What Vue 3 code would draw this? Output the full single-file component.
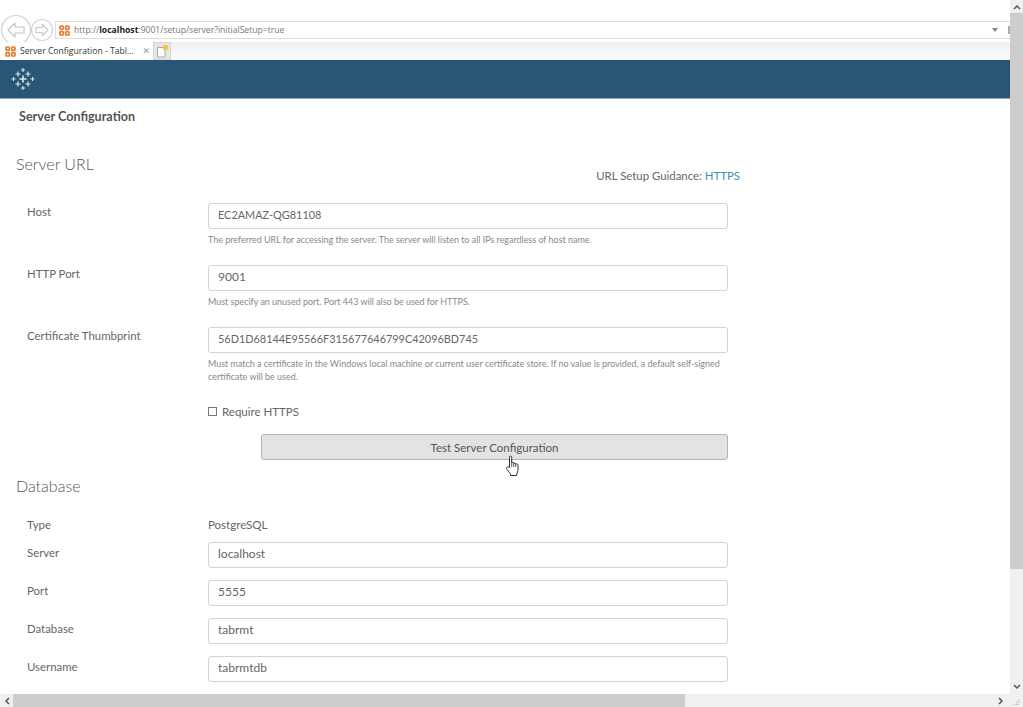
<script setup>
const dbRows = [
  { label: 'Server', value: 'localhost' },
  { label: 'Port', value: '5555' },
  { label: 'Database', value: 'tabrmt' },
  { label: 'Username', value: 'tabrmtdb' },
]
</script>

<template>
  <div class="window">
    <div class="main">
      <div class="toolbar">
        <svg class="nav" width="55" height="42" viewBox="0 0 55 42">
          <circle cx="16" cy="30" r="14.5" fill="#fff" stroke="#d2d2d2" stroke-width="1.2" />
          <path d="M8 30l7-7v4h9v6h-9v4z" fill="#fff" stroke="#c4c4c4" stroke-width="1.2" stroke-linejoin="round" />
          <circle cx="42" cy="30" r="10.5" fill="#fff" stroke="#d4d4d4" stroke-width="1.2" />
          <path d="M48 30l-5.500-5.500v3h-6.500v5h6.500v3z" fill="#fff" stroke="#c8c8c8" stroke-width="1.1" stroke-linejoin="round" />
        </svg>
        <div class="address">
          <svg class="fav" width="11" height="11" viewBox="0 0 11 11">
            <g fill="none" stroke="#e8792f" stroke-width="1.700">
              <rect x="1" y="1" width="3.300" height="3.300" rx=".8" /><rect x="6.700" y="1" width="3.300" height="3.300" rx=".8" />
              <rect x="1" y="6.700" width="3.300" height="3.300" rx=".8" /><rect x="6.700" y="6.700" width="3.300" height="3.300" rx=".8" />
            </g>
          </svg>
          <span class="url">http://<b>localhost</b>:9001/setup/server?initialSetup=true</span>
          <span class="caret"></span>
          <span class="edge"></span>
        </div>
      </div>
      <div class="tabs">
        <div class="tab">
          <svg class="fav" width="11" height="11" viewBox="0 0 11 11">
            <g fill="none" stroke="#e8792f" stroke-width="1.700">
              <rect x="1" y="1" width="3.300" height="3.300" rx=".8" /><rect x="6.700" y="1" width="3.300" height="3.300" rx=".8" />
              <rect x="1" y="6.700" width="3.300" height="3.300" rx=".8" /><rect x="6.700" y="6.700" width="3.300" height="3.300" rx=".8" />
            </g>
          </svg>
          <span class="tab-title">Server Configuration - Tabl...</span>
          <span class="tab-x">✕</span>
        </div>
        <div class="new-tab">
          <svg width="13" height="14" viewBox="0 0 13 14">
            <path d="M1.500 3.500h7.500v9.500h-7.500z" fill="#fff" stroke="#a8a8a8" />
            <circle cx="9.500" cy="3.500" r="2.800" fill="#f5c14a" />
          </svg>
        </div>
      </div>
      <header class="brand">
        <svg width="24" height="24" viewBox="0 0 24 24" stroke="#dfe8ee" fill="none">
          <path stroke-width="1.600" d="M12 8.500v7M8.500 12h7" />
          <path stroke-width="1.200" d="M7 4.500v5M4.500 7h5M17 4.500v5M14.500 7h5M7 14.500v5M4.500 17h5M17 14.500v5M14.500 17h5" />
          <path stroke-width="1" d="M12 1v4M10 3h4M12 19v4M10 21h4M2.500 10v4M.5 12h4M21.500 10v4M19.500 12h4" />
        </svg>
      </header>
      <div class="content">
        <h1 class="page-title">Server Configuration</h1>
        <div class="url-section">
          <h2 class="heading">Server URL</h2>
          <p class="guidance">URL Setup Guidance: <a class="link">HTTPS</a></p>
        </div>
        <div class="form">
          <label class="label">Host</label>
          <div class="field">
            <div class="input caps">EC2AMAZ-QG81108</div>
            <p class="help">The preferred URL for accessing the server. The server will listen to all IPs regardless of host name.</p>
          </div>
          <label class="label">HTTP Port</label>
          <div class="field">
            <div class="input">9001</div>
            <p class="help">Must specify an unused port. Port 443 will also be used for HTTPS.</p>
          </div>
          <label class="label">Certificate Thumbprint</label>
          <div class="field">
            <div class="input caps">56D1D68144E95566F315677646799C42096BD745</div>
            <p class="help">Must match a certificate in the Windows local machine or current user certificate store. If no value is provided, a default self-signed certificate will be used.</p>
          </div>
          <div></div>
          <div class="check-row"><span class="checkbox"></span>Require HTTPS</div>
        </div>
        <div class="button-row">
          <div class="button">
            Test Server Configuration
            <svg class="hand" width="16" height="22" viewBox="0 0 16 22">
              <path d="M4.500 12.500V2.200c0-1.500 2.200-1.500 2.200 0V8c0-1 2-1 2 0v.8c0-1 2-1 2 0v.7c0-1 2.300-.8 2.300.5v4.500c0 2-.6 3-1.300 4.500v1.500H5.500V19c-1-1.500-3.800-4.500-4-5.500-.2-1.500 1.500-2 3-1z" fill="#fff" stroke="#333" stroke-width="1" stroke-linejoin="round" />
              <path d="M6.700 8v4M8.700 8.800v3.200M10.700 9.500V12" stroke="#333" stroke-width=".8" fill="none" />
            </svg>
          </div>
        </div>
        <h2 class="heading db-heading">Database</h2>
        <div class="type-row"><span class="label">Type</span><span class="type-value">PostgreSQL</span></div>
        <div class="db-form">
          <template v-for="row in dbRows" :key="row.label">
            <label class="label db-label">{{ row.label }}</label>
            <div class="input">{{ row.value }}</div>
          </template>
          <div></div>
          <div class="input"></div>
        </div>
      </div>
    </div>
    <div class="vscroll">
      <svg width="8" height="6" viewBox="0 0 8 6"><path d="M1 5l3-3 3 3" fill="none" stroke="#555" stroke-width="1.500" /></svg>
      <div class="vthumb"></div>
      <svg width="8" height="6" viewBox="0 0 8 6"><path d="M1 1l3 3 3-3" fill="none" stroke="#555" stroke-width="1.500" /></svg>
    </div>
    <div class="hscroll">
      <svg width="6" height="8" viewBox="0 0 6 8"><path d="M5 1L2 4l3 3" fill="none" stroke="#555" stroke-width="1.500" /></svg>
      <div class="hthumb"></div>
      <svg class="hright" width="6" height="8" viewBox="0 0 6 8"><path d="M1 1l3 3-3 3" fill="none" stroke="#555" stroke-width="1.500" /></svg>
    </div>
    <div class="corner">
      <svg width="13" height="13" viewBox="0 0 13 13" fill="#b0b0b0">
        <rect x="8" y="3" width="1" height="1" /><rect x="6" y="5" width="1" height="1" /><rect x="8" y="5" width="1" height="1" />
        <rect x="4" y="7" width="1" height="1" /><rect x="6" y="7" width="1" height="1" /><rect x="8" y="7" width="1" height="1" />
      </svg>
    </div>
  </div>
</template>

<style>
html, body { margin: 0; overflow: hidden; background: #fff; }
</style>

<style scoped>
* { box-sizing: border-box; }
.window {
  width: 1023px; height: 707px;
  display: grid;
  grid-template-columns: 1010px 13px;
  grid-template-rows: 694px 13px;
  font-family: Lato, "Liberation Sans", sans-serif;
  font-weight: 400;
  color: #666;
  background: #f0f0f0;
  overflow: hidden;
}
.main { display: flex; flex-direction: column; overflow: hidden; background: #fff; }
.toolbar { height: 42px; display: flex; flex: none; background: #fff; }
.nav { flex: none; }
.address {
  flex: 1; height: 18px; margin-top: 21px;
  border-top: 1px solid #dcdcdc; border-bottom: 1px solid #dcdcdc; border-left: 1px solid #dcdcdc;
  display: flex; align-items: center; padding-left: 3px; gap: 4px;
}
.fav { flex: none; }
.url { flex: 1; font: 400 8.600px "Open Sans", sans-serif; color: #777; }
.url b { color: #222; font-weight: 700; }
.caret { width: 0; height: 0; border: 3px solid transparent; border-top: 4px solid #888; border-bottom: 0; margin-right: 6px; }
.edge { width: 2px; height: 8px; background: #aaa; }
.tabs {
  height: 18px; flex: none; display: flex;
  background: linear-gradient(#f1f1f1, #fbfbfb);
}
.tab {
  width: 153px; background: #fff; display: flex; align-items: center; padding: 0 3px 0 5px; gap: 4px;
}
.tab-title { flex: 1; font: 400 8.600px "Open Sans", sans-serif; color: #333; white-space: nowrap; }
.tab-x { font-size: 9px; color: #999; font-family: "DejaVu Sans", sans-serif; }
.new-tab {
  width: 18px; background: #e6e6e6; border: 1px solid #d4d4d4; display: flex; align-items: center; justify-content: center;
}
.brand {
  height: 39px; flex: none; background: #2a5675; border-bottom: 1px solid #8ba3b4;
  display: flex; align-items: center; padding-left: 11px;
}
.content { flex: 1; overflow: hidden; padding: 0 0 0 15px; }
.page-title { margin: 11px 0 0 4px; font-size: 12.600px; line-height: 14px; font-weight: 700; color: #555; }
.url-section { width: 725px; display: flex; flex-direction: column; }
.heading { margin: 0 0 0 1px; font-size: 16px; line-height: 20px; font-weight: 300; color: #555; }
.url-section .heading { margin-top: 30px; }
.guidance { margin: -5px 0 0; align-self: flex-end; font-size: 11.400px; line-height: 14px; color: #666; }
.link { color: #3f8fb3; }
.form {
  display: grid; grid-template-columns: 181px 520px; margin: 20px 0 0 12px;
  font-size: 12px;
}
.label { font-size: 11.400px; line-height: 14px; padding-top: 2px; color: #666; }
.field { padding-bottom: 19px; }
.input {
  height: 26px; border: 1px solid #d4d4d4; border-radius: 3px; padding: 0 9px 3px;
  display: flex; align-items: center; font-size: 12px; color: #666; background: #fff;
}
.input.caps { font-size: 10.900px; }
.help { margin: 4px 0 0; font-size: 8.950px; line-height: 13px; color: #888; height: 13px; }
.field:nth-child(6) .help { height: 26px; }
.field:nth-child(6) { padding-bottom: 20px; }
.check-row { display: flex; align-items: center; gap: 5px; height: 16px; font-size: 11.500px; color: #666; }
.checkbox { width: 9px; height: 9px; border: 1px solid #777; background: #fff; }
.button-row { display: flex; margin: 15px 0 0 246px; }
.button {
  position: relative;
  width: 467px; height: 26px; background: #e3e3e3; border: 1px solid #b4b4b4; border-radius: 3px;
  display: flex; align-items: center; justify-content: center; font-size: 11.500px; color: #555;
}
.hand { position: absolute; left: 243px; top: 20px; }
.db-heading { margin-top: 16px; }
.type-row { display: grid; grid-template-columns: 181px 520px; margin: 20px 0 0 12px; }
.type-value { font-size: 11.500px; line-height: 14px; color: #666; padding-top: 2px; }
.db-form { display: grid; grid-template-columns: 181px 520px; row-gap: 12px; margin: 10px 0 0 12px; }
.db-label { padding-top: 4px; }
.vscroll {
  display: flex; flex-direction: column; align-items: center; background: #f0f0f0;
  padding: 4px 0 4px;
}
.vthumb { width: 13px; flex: none; height: 556px; margin: 3px 0 auto; background: #cdcdcd; }
.hscroll {
  display: flex; align-items: center; padding: 0 0 0 4px; background: #f0f0f0;
}
.hthumb { width: 672px; height: 13px; margin-left: 3px; background: #cdcdcd; }
.hright { margin-left: auto; margin-right: 6px; }
.corner { background: #f0f0f0; }
</style>
